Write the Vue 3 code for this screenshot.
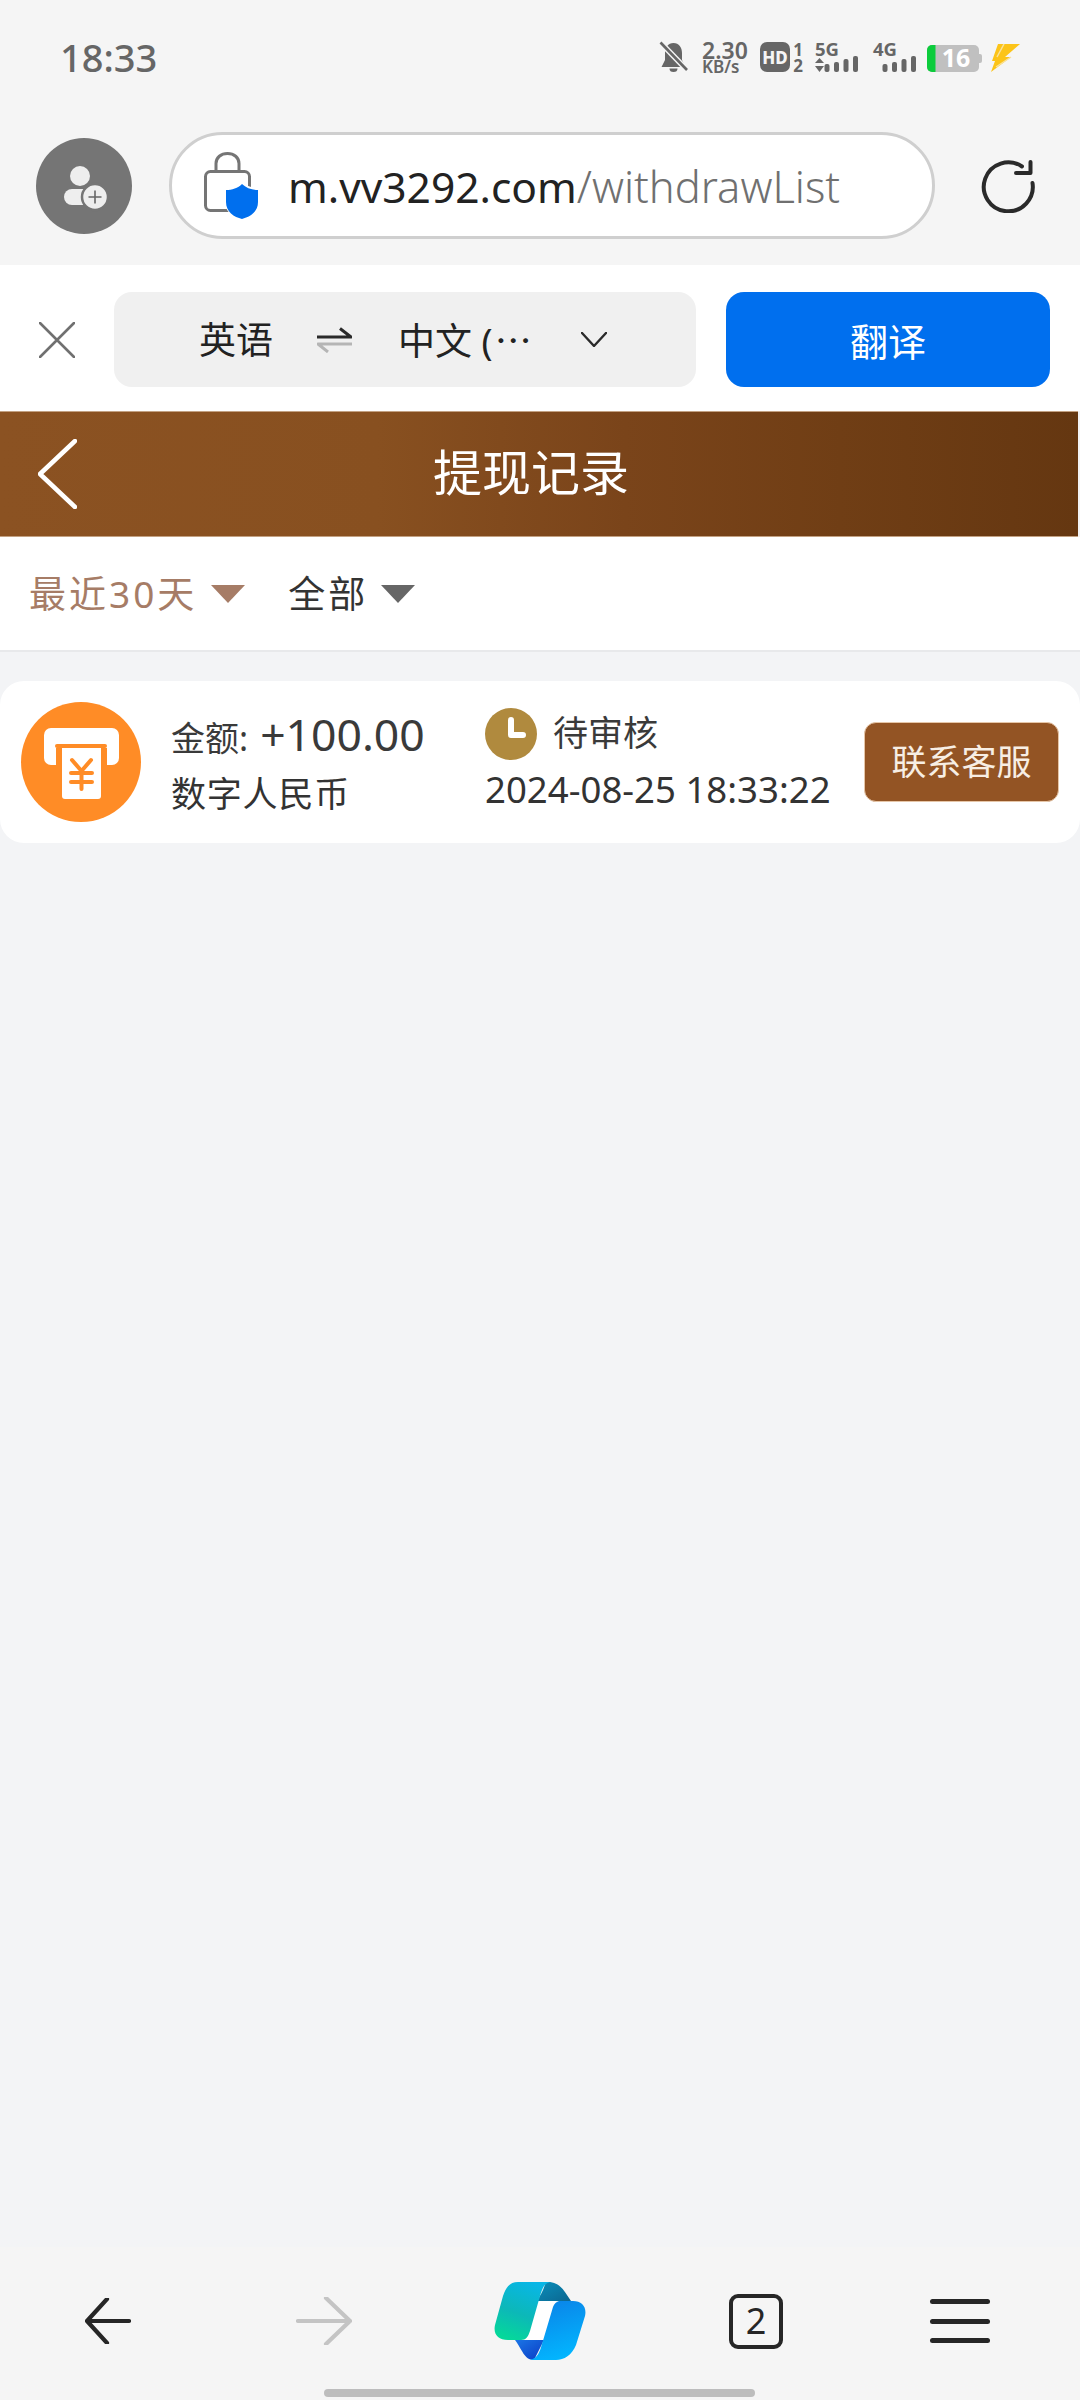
<script setup>
const bars = [
  { x: 9.5, h: 8 },
  { x: 19, h: 10 },
  { x: 28.5, h: 13 },
  { x: 38, h: 16 }
]
</script>

<template>
  <div class="page">
    <div class="chrome">
      <div class="status">
        <span class="time">18:33</span>
        <div class="status-icons">
          <svg class="s-bell" viewBox="0 0 27 32" width="27" height="32">
            <path d="M13.5 2C8 2 5 6.500 5 12V19L1.500 26H25.500L22 19V12C22 6.500 19 2 13.500 2Z" fill="#666" />
            <path d="M9.500 27.500a4 3.500 0 0 0 8 0Z" fill="#666" />
            <path d="M0 1 27 29" stroke="#f5f5f5" stroke-width="5.500" />
            <path d="M0.500 1.500 27 29" stroke="#666" stroke-width="2.600" />
          </svg>
          <div class="speed">
            <span class="speed-a">2.30</span>
            <span class="speed-b">KB/s</span>
          </div>
          <svg class="s-hd" viewBox="0 0 43 32" width="43" height="32">
            <rect x="0" y="1" width="30" height="30" rx="7" fill="#666" />
            <text x="15" y="22.500" text-anchor="middle" class="t-hd">HD</text>
            <text x="38" y="15" text-anchor="middle" class="t-sim">1</text>
            <text x="38" y="31" text-anchor="middle" class="t-sim">2</text>
          </svg>
          <svg class="s-net" viewBox="0 0 43 32" width="43" height="32">
            <text x="0" y="15" class="t-net">5G</text>
            <path d="M4.500 17 9 22H0Z" fill="#666" />
            <path d="M4.500 31 9 25H0Z" fill="#666" />
            <rect v-for="b in bars" :key="b.x" :x="b.x" :y="31 - b.h" width="5" :height="b.h" rx="2" fill="#666" />
          </svg>
          <svg class="s-net" viewBox="0 0 43 32" width="43" height="32">
            <text x="0" y="15" class="t-net">4G</text>
            <rect v-for="b in bars" :key="b.x" :x="b.x" :y="31 - b.h" width="5" :height="b.h" rx="2" fill="#666" />
          </svg>
          <svg class="s-bat" viewBox="0 0 55 32" width="55" height="32">
            <rect x="0" y="4" width="52" height="27" rx="5" fill="#c0c0c0" />
            <path d="M5 4H8.500V31H5a5 5 0 0 1-5-5V9a5 5 0 0 1 5-5Z" fill="#0ccc3c" />
            <path d="M52 13h1a2 2 0 0 1 2 2v5a2 2 0 0 1-2 2h-1Z" fill="#c0c0c0" />
            <text x="29" y="26" text-anchor="middle" class="t-bat">16</text>
          </svg>
          <svg class="s-bolt" viewBox="0 0 30 32" width="30" height="32">
            <path d="M8 3H30L15 16H21L1 31 5 20H2Z" fill="#fcc419" />
            <path d="M14 3 7 16M21 16 6 26" stroke="#f9e29a" stroke-width="1.500" fill="none" />
          </svg>
        </div>
      </div>

      <div class="url-row">
        <svg class="avatar" viewBox="0 0 96 96" width="96" height="96">
          <circle cx="48" cy="48" r="48" fill="#757575" />
          <circle cx="44" cy="38" r="10" fill="#eee" />
          <rect x="28" y="51" width="36" height="16" rx="8" fill="#eee" />
          <circle cx="59" cy="59" r="13" fill="#eee" stroke="#757575" stroke-width="2.500" />
          <path d="M59 52.500V65.500M52.500 59H65.500" stroke="#666" stroke-width="1.600" />
        </svg>
        <div class="url-bar">
          <svg class="lock" viewBox="0 0 54 67" width="54" height="67">
            <path d="M12 19V11.500C12 5.500 17 1.500 23.500 1.500S35 5.500 35 11.500V19" fill="none" stroke="#757575" stroke-width="3" />
            <rect x="1.500" y="19.500" width="44" height="39" rx="5" fill="#fff" stroke="#757575" stroke-width="3" />
            <path d="M38 30C42 34 48 36 55 36V50C55 60 46 66 38 68C30 66 21 60 21 50V36C28 36 34 34 38 30Z" fill="#fff" />
            <path d="M38 32C42 36 48 38 54 38V50C54 60 46 65 38 67C30 65 22 60 22 50V38C28 38 34 36 38 32Z" fill="#006fee" />
          </svg>
          <span class="url-text">m.vv3292.com<span class="url-path">/withdrawList</span></span>
        </div>
        <svg class="refresh" viewBox="0 0 54 54" width="54" height="54">
          <path d="M41 7.500A24.500 24.500 0 1 0 51.500 24" fill="none" stroke="#2a2a2a" stroke-width="4" stroke-linecap="round" />
          <path d="M35 14 49.500 14V3" fill="none" stroke="#2a2a2a" stroke-width="4" stroke-linecap="round" stroke-linejoin="round" />
        </svg>
      </div>
    </div>

    <div class="trans-bar">
      <svg class="close" viewBox="0 0 36 36" width="36" height="36">
        <path d="M1 1 35 35M35 1 1 35" stroke="#707070" stroke-width="2.600" stroke-linecap="round" />
      </svg>
      <div class="lang-box">
        <span class="lang-from">英语</span>
        <svg class="swap" viewBox="0 0 35 26" width="35" height="26">
          <path d="M0 10H34L23 1.500" fill="none" stroke="#2a2a2a" stroke-width="3" stroke-linejoin="round" />
          <path d="M35 17H1L11 25" fill="none" stroke="#b5b5b5" stroke-width="3" stroke-linejoin="round" />
        </svg>
        <span class="lang-to">中文 (<span class="ellipsis">…</span></span>
        <svg class="chev" viewBox="0 0 26 15" width="26" height="15">
          <path d="M1 1 13 14 25 1" fill="none" stroke="#2a2a2a" stroke-width="2.400" stroke-linecap="round" stroke-linejoin="round" />
        </svg>
      </div>
      <div class="trans-btn">翻译</div>
    </div>

    <div class="header">
      <svg class="back" viewBox="0 0 39 70" width="39" height="70">
        <path d="M37 2 2 35 37 68" fill="none" stroke="#fff" stroke-width="4.500" stroke-linecap="round" stroke-linejoin="round" />
      </svg>
      <span class="title">提现记录</span>
    </div>

    <div class="filters">
      <span class="f-label f-active">最近30天</span>
      <i class="tri tri-active"></i>
      <span class="f-label f-plain">全部</span>
      <i class="tri tri-plain"></i>
    </div>

    <div class="card">
      <svg class="atm" viewBox="0 0 120 120" width="120" height="120">
        <circle cx="60" cy="60" r="60" fill="#ff8c26" />
        <rect x="23" y="26" width="75" height="37" rx="7" fill="#fff" />
        <rect x="34" y="42" width="52" height="4" rx="2" fill="#ff8c26" />
        <path d="M41 46H80V94a3 3 0 0 1-3 3H44a3 3 0 0 1-3-3Z" fill="#fff" />
        <path d="M35 46H41V66H35ZM80 46H86V66H80Z" fill="#ff8c26" />
        <path d="M51 58 60.500 69 70 58M60.500 69V87M50 71H71M50 80H71" fill="none" stroke="#ff8c26" stroke-width="4" stroke-linecap="round" stroke-linejoin="round" />
      </svg>
      <div class="col-amount">
        <div class="amount"><span class="amt-label">金额:</span> <span class="amt-value">+100.00</span></div>
        <div class="currency">数字人民币</div>
      </div>
      <div class="col-status">
        <div class="status-line">
          <svg class="clock" viewBox="0 0 52 52" width="52" height="52">
            <circle cx="26" cy="26" r="26" fill="#b08a3e" />
            <path d="M26 12V27H38" fill="none" stroke="#fff" stroke-width="6" stroke-linecap="round" stroke-linejoin="round" />
          </svg>
          <span class="state">待审核</span>
        </div>
        <div class="date">2024-08-25 18:33:22</div>
      </div>
      <div class="contact">联系客服</div>
    </div>

    <div class="bottom">
      <div class="nav">
        <svg class="nav-i" viewBox="0 0 46 46" width="46" height="46">
          <path d="M44 23H3M22 1 2 23 22 45" fill="none" stroke="#262626" stroke-width="4.200" stroke-linecap="round" stroke-linejoin="round" />
        </svg>
        <svg class="nav-i" viewBox="0 0 56 48" width="56" height="48">
          <path d="M2 24H54M30 1 54 24 30 47" fill="none" stroke="#c4c4c4" stroke-width="4.200" stroke-linecap="round" stroke-linejoin="round" />
        </svg>
        <svg class="nav-i" viewBox="0 0 92 80" width="92" height="80">
          <defs>
            <linearGradient id="cpL" x1="0.65" y1="0" x2="0.3" y2="1">
              <stop offset="0" stop-color="#08b6e6" />
              <stop offset="0.55" stop-color="#0cb8b8" />
              <stop offset="1" stop-color="#05d89a" />
            </linearGradient>
            <linearGradient id="cpR" x1="0.3" y1="0" x2="0.6" y2="1">
              <stop offset="0" stop-color="#0a84e8" />
              <stop offset="1" stop-color="#02b7ff" />
            </linearGradient>
            <linearGradient id="cpT" x1="0" y1="0" x2="1" y2="1">
              <stop offset="0" stop-color="#0a8fbb" />
              <stop offset="1" stop-color="#0b6690" />
            </linearGradient>
            <linearGradient id="cpB" x1="0" y1="0" x2="1" y2="1">
              <stop offset="0" stop-color="#1b76e6" />
              <stop offset="1" stop-color="#0a3bc4" />
            </linearGradient>
          </defs>
          <path d="M40 20H62L50 60H28Z" fill="#fff" />
          <path d="M52 1C66 0 70 10 77 20H42C48 14 50 6 52 1Z" fill="url(#cpT)" />
          <path d="M21 59H50L40 79C30 79 28 68 21 59Z" fill="url(#cpB)" />
          <path d="M24 1H56C49 3 48 9 46 15L36 50C34 56 32 59 27 59H14C4 59 -1 53 1 44L9 15C12 6 16 1 24 1Z" fill="url(#cpL)" />
          <path d="M65 20H79C88 20 93 26 91 35L82 64C78 74 70 79 62 79H36C44 77 46 70 48 63L59 26C60 23 62 21 65 20Z" fill="url(#cpR)" />
        </svg>
        <div class="tabs">2</div>
        <div class="menu"><i></i><i></i><i></i></div>
      </div>
      <div class="handle"></div>
    </div>
  </div>
</template>

<style>
html, body { margin: 0; padding: 0; background: #f3f4f6; }
</style>

<style scoped>
.page {
  width: 1080px;
  height: 2400px;
  display: flex;
  flex-direction: column;
  background: #f3f4f6;
  overflow: hidden;
  font-family: "Noto Sans", "Noto Sans CJK SC", sans-serif;
  color: #333;
}
.chrome { background: #f5f5f5; height: 265px; box-sizing: border-box; }
.status {
  height: 114px;
  display: flex;
  align-items: center;
  padding: 0 60px;
}
.time { font-size: 38px; font-weight: 500; color: #666; line-height: 1; }
.status-icons { margin-left: auto; display: flex; align-items: center; }
.status-icons svg { display: block; flex: none; overflow: visible; }
.s-bell { margin-right: 15px; }
.speed { display: flex; flex-direction: column; width: 45px; margin-right: 13px; color: #666; height: 32px; }
.speed-a { font-size: 23px; line-height: 19px; font-weight: 600; white-space: nowrap; }
.speed-b { font-size: 17px; line-height: 14px; font-weight: 600; white-space: nowrap; }
.s-hd { margin-right: 12px; }
.s-net { margin-right: 15px; }
.s-net + .s-net { margin-right: 11px; }
.s-bat { margin-right: 8px; }
.t-hd { font: 800 17px "Noto Sans", sans-serif; fill: #f5f5f5; }
.t-sim { font: 700 17px "Noto Sans", sans-serif; fill: #666; }
.t-net { font: 700 18.500px "Noto Sans", sans-serif; fill: #666; }
.t-bat { font: 700 25px "Noto Sans", sans-serif; fill: #fff; }

.url-row {
  margin-top: 18px;
  display: flex;
  align-items: center;
  height: 107px;
  padding-left: 36px;
}
.avatar { flex: none; display: block; margin-right: 37px; }
.url-bar {
  width: 766px;
  height: 107px;
  box-sizing: border-box;
  background: #fff;
  border: 3px solid #cfcfcf;
  border-radius: 54px;
  display: flex;
  align-items: center;
  padding-left: 32px;
}
.lock { flex: none; display: block; margin-right: 30px; }
.url-text { font-size: 42.500px; color: #222; white-space: nowrap; line-height: 1; margin-top: 2px; }
.url-path { color: #707070; font-weight: 300; font-size: 43.500px; }
.refresh { flex: none; display: block; margin-left: 46px; }

.trans-bar {
  height: 146px;
  box-sizing: border-box;
  background: #fff;
  padding: 27px 0 24px 39px;
  display: flex;
  align-items: center;
}
.close { flex: none; display: block; margin-right: 39px; }
.lang-box {
  width: 582px;
  height: 95px;
  background: #f0f0f0;
  border-radius: 18px;
  display: flex;
  align-items: center;
  box-sizing: border-box;
  padding-left: 85px;
  font-size: 37px;
  color: #222;
}
.lang-from, .lang-to { white-space: nowrap; line-height: 1; }
.swap { flex: none; display: block; margin: 0 46px 0 44px; }
.lang-to { width: 137px; }
.ellipsis { font-family: "Noto Sans CJK SC", sans-serif; letter-spacing: 3px; margin-left: 2px; }
.chev { flex: none; display: block; margin-left: 46px; }
.trans-btn {
  margin-left: 30px;
  width: 324px;
  height: 95px;
  border-radius: 18px;
  background: #006fee;
  color: #fff;
  font-size: 38px;
  display: flex;
  align-items: center;
  justify-content: center;
}

.header {
  height: 126px;
  box-sizing: border-box;
  margin-right: 2px;
  border-top: 1px solid #c3a182;
  border-bottom: 1px solid #c3a182;
  background: linear-gradient(90deg, #8b5222 0%, #885020 35%, #7a441a 58%, #703e15 78%, #653711 100%);
  display: flex;
  align-items: center;
  padding-left: 38px;
}
.back { flex: none; display: block; margin-right: 356px; }
.title { color: #fff; font-size: 49px; line-height: 1; margin-top: -4px; white-space: nowrap; }

.filters {
  height: 115px;
  box-sizing: border-box;
  background: #fff;
  border-bottom: 2px solid #e8e9eb;
  display: flex;
  align-items: center;
  padding-left: 29px;
}
.f-label { font-size: 37px; line-height: 1; white-space: nowrap; letter-spacing: 3px; }
.f-active { color: #a67c66; }
.f-plain { color: #333; margin-left: 43px; }
.tri {
  display: block;
  width: 0;
  height: 0;
  border-left: 17px solid transparent;
  border-right: 17px solid transparent;
  border-top: 18px solid #666;
  margin-left: 13px;
}
.tri-active { border-top-color: #a67c66; margin-left: 14px; }
.tri-plain { border-top-color: #666; }

.card {
  margin-top: 29px;
  height: 162px;
  background: #fff;
  border-radius: 24px;
  display: flex;
  align-items: center;
  padding-left: 21px;
  box-sizing: border-box;
}
.atm { flex: none; display: block; margin-right: 30px; }
.col-amount { width: 314px; flex: none; }
.amount { display: flex; align-items: baseline; height: 50px; color: #3a3a3a; white-space: nowrap; }
.amt-label { font-size: 34px; margin-right: 12px; line-height: 50px; }
.amt-value { font-size: 44.500px; line-height: 50px; }
.currency { margin-top: 13px; font-size: 35px; line-height: 44px; color: #333; white-space: nowrap; letter-spacing: 0.800px; }
.col-status { width: 379px; flex: none; margin-top: -4px; }
.status-line { display: flex; align-items: center; height: 52px; margin-bottom: 6px; }
.clock { flex: none; display: block; margin-right: 16px; }
.state { font-size: 35px; line-height: 1; color: #3a3a3a; white-space: nowrap; margin-top: -4px; }
.date { font-size: 36.600px; line-height: 46px; color: #333; white-space: nowrap; }
.contact {
  flex: none;
  width: 195px;
  height: 80px;
  box-sizing: border-box;
  border: 1px solid #e6c6a8;
  border-radius: 12px;
  background: #935424;
  color: #f7eee4;
  font-size: 35px;
  display: flex;
  align-items: center;
  justify-content: center;
  white-space: nowrap;
  padding-bottom: 6px;
}

.bottom {
  margin-top: auto;
  height: 153px;
  background: #f5f5f5;
  box-sizing: border-box;
  display: flex;
  flex-direction: column;
}
.nav {
  display: grid;
  grid-template-columns: repeat(5, 216px);
  justify-items: center;
  align-items: center;
  height: 136px;
  padding-top: 6px;
}
.nav-i { display: block; }
.tabs {
  width: 54px;
  height: 55px;
  box-sizing: border-box;
  border: 4px solid #262626;
  border-radius: 9px;
  display: flex;
  align-items: center;
  justify-content: center;
  font-size: 36px;
  color: #262626;
  line-height: 1;
}
.menu { width: 60px; display: flex; flex-direction: column; gap: 14.500px; margin-right: 24px; }
.menu i { display: block; height: 5px; border-radius: 3px; background: #262626; }
.handle {
  width: 431px;
  height: 8px;
  border-radius: 4px;
  background: #bdbdbd;
  margin-left: 324px;
}
</style>
